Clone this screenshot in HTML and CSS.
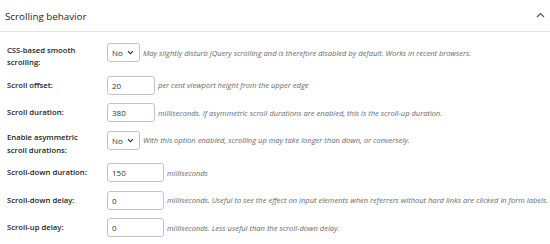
FILE: index.html
```html
<!DOCTYPE html>
<html lang="en">
<head>
<meta charset="utf-8">
<title>Scrolling behavior</title>
<link rel="stylesheet" href="styles.css">
</head>
<body>
<section class="panel">
  <header class="panel-head">
    <h2 class="panel-title">Scrolling behavior</h2>
    <svg class="toggle" width="9" height="6" viewBox="0 0 9 6" aria-hidden="true"><path d="M1 5 L4.5 1.5 L8 5" fill="none" stroke="#50575e" stroke-width="1.2"/></svg>
  </header>
  <div class="rows">
    <div class="row row-tall">
      <label class="label label-tall">CSS-based smooth scrolling:</label>
      <div class="field">
        <span class="select">No<svg class="caret" width="7" height="5" viewBox="0 0 7 5"><path d="M1 1.2 L3.5 3.7 L6 1.2" fill="none" stroke="#2c3338" stroke-width="1.1"/></svg></span>
        <span class="desc">May slightly disturb jQuery scrolling and is therefore disabled by default. Works in recent browsers.</span>
      </div>
    </div>
    <div class="row">
      <label class="label">Scroll offset:</label>
      <div class="field">
        <span class="input">20</span>
        <span class="desc">per cent viewport height from the upper edge</span>
      </div>
    </div>
    <div class="row">
      <label class="label">Scroll duration:</label>
      <div class="field">
        <span class="input">380</span>
        <span class="desc">milliseconds. If asymmetric scroll durations are enabled, this is the scroll-up duration.</span>
      </div>
    </div>
    <div class="row row-tall">
      <label class="label label-tall">Enable asymmetric scroll durations:</label>
      <div class="field">
        <span class="select">No<svg class="caret" width="7" height="5" viewBox="0 0 7 5"><path d="M1 1.2 L3.5 3.7 L6 1.2" fill="none" stroke="#2c3338" stroke-width="1.1"/></svg></span>
        <span class="desc">With this option enabled, scrolling up may take longer than down, or conversely.</span>
      </div>
    </div>
    <div class="row">
      <label class="label">Scroll-down duration:</label>
      <div class="field">
        <span class="input input-wide">150</span>
        <span class="desc">milliseconds</span>
      </div>
    </div>
    <div class="row">
      <label class="label">Scroll-down delay:</label>
      <div class="field">
        <span class="input input-wide">0</span>
        <span class="desc">milliseconds. Useful to see the effect on input elements when referrers without hard links are clicked in form labels.</span>
      </div>
    </div>
    <div class="row">
      <label class="label">Scroll-up delay:</label>
      <div class="field">
        <span class="input input-wide">0</span>
        <span class="desc">milliseconds. Less useful than the scroll-down delay.</span>
      </div>
    </div>
  </div>
</section>
</body>
</html>
```
FILE: styles.css
```css
html, body {
  margin: 0;
  padding: 0;
  background: #ffffff;
}
body {
  font-family: "Open Sans", "Noto Sans", sans-serif;
  color: #1d2327;
  width: 550px;
  height: 244px;
  overflow: hidden;
}
.panel-head {
  display: flex;
  align-items: center;
  justify-content: space-between;
  height: 31px;
  border-bottom: 1px solid #e2e4e7;
  padding: 0 5px 0 5px;
}
.panel-title {
  margin: 0;
  font-size: 9.8px;
  font-weight: 400;
  color: #1d2327;
  padding-top: 1px;
}
.toggle {
  display: block;
  margin-top: -2px;
}
.rows {
  padding: 11px 0 0 7px;
}
.row {
  display: flex;
  align-items: flex-start;
  height: 27.5px;
}
.row-tall {
  height: 32.5px;
}
.label {
  width: 100px;
  flex: none;
  font-size: 7.7px;
  font-weight: 600;
  line-height: 12.7px;
  padding-top: 3px;
  color: #1d2327;
}
.label-tall {
  padding-top: 0.5px;
  padding-right: 20px;
  width: 80px;
}
.field {
  display: flex;
  align-items: center;
  height: 19px;
}
.select, .input {
  box-sizing: border-box;
  height: 19px;
  border: 1px solid #c3c4c7;
  border-radius: 3px;
  display: inline-flex;
  align-items: center;
  font-size: 8px;
  color: #2c3338;
  padding-left: 4px;
  flex: none;
}
.select {
  width: 33px;
}
.caret {
  margin-left: 4px;
  display: block;
}
.input {
  width: 48px;
}
.input-wide {
  width: 57px;
}
.desc {
  font-style: italic;
  font-size: 7.55px;
  color: #646970;
  margin-left: 3px;
  white-space: nowrap;
}
```
